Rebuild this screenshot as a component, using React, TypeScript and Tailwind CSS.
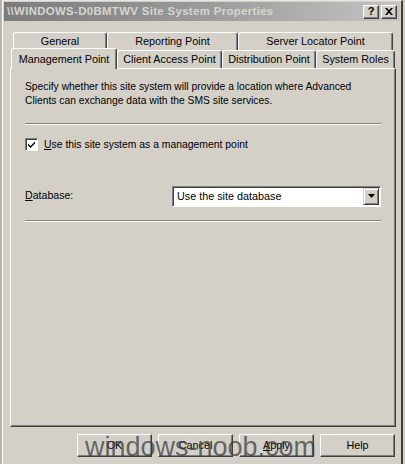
import React from "react";

const font = { fontFamily: '"Liberation Sans", Arial, sans-serif' };

function Tab({ label, w, h, selected }: { label: string; w: number; h: number; selected?: boolean }) {
  return (
    <div
      className={
        "flex items-center justify-center rounded-t-[3px] border-t border-l border-white border-r border-r-[#404040] bg-[#d4d0c8] text-[10.8px] text-black shadow-[inset_-1px_0_0_#808080] " +
        (selected ? "relative z-10" : "")
      }
      style={{ width: w, height: h }}
    >
      {label}
    </div>
  );
}

function Button({ children }: { children: React.ReactNode }) {
  return (
    <div className="flex h-[23px] w-[75px] items-center justify-center border border-t-white border-l-white border-r-[#404040] border-b-[#404040] bg-[#d4d0c8] text-[10.8px] text-black shadow-[inset_-1px_-1px_0_#808080]">
      {children}
    </div>
  );
}

function Separator() {
  return <div className="h-[2px] w-full border-t border-t-[#808080] border-b border-b-white" />;
}

export default function App() {
  return (
    <div className="relative h-[464px] w-[405px] overflow-hidden bg-[#d4d0c8]" style={font}>
      <div className="absolute left-0 top-0 h-full w-[2px] bg-[#b8b4ac]" />
      <div className="ml-[2px] flex h-[464px] w-[401px] flex-col border-l border-l-white border-r-2 border-r-[#404040] border-t border-t-[#e8e6e2]">
        {/* title bar */}
        <div className="mx-[1px] mt-[1px] flex h-[19px] items-center bg-gradient-to-r from-[#7c7c7c] via-[#9a9a9a] to-[#c4c4c4] pl-[3px] pr-[3px]">
          <span className="text-[11.4px] font-bold tracking-[0.35px] text-[#d8d5cf]">\\WINDOWS-D0BMTWV Site System Properties</span>
          <div className="ml-auto flex gap-[2px]">
            <div className="flex h-[14px] w-[16px] items-center justify-center border border-t-white border-l-white border-r-[#404040] border-b-[#404040] bg-[#d4d0c8] text-[11px] font-bold leading-none text-black shadow-[inset_-1px_-1px_0_#808080]">
              ?
            </div>
            <div className="flex h-[14px] w-[16px] items-center justify-center border border-t-white border-l-white border-r-[#404040] border-b-[#404040] bg-[#d4d0c8] shadow-[inset_-1px_-1px_0_#808080]">
              <svg width="8" height="7" viewBox="0 0 8 7">
                <path d="M0 0h2l2 2.2L6 0h2L5 3.5 8 7H6L4 4.8 2 7H0l3-3.5z" fill="#000" />
              </svg>
            </div>
          </div>
        </div>

        {/* tabs */}
        <div className="mt-[11px] flex pl-[10px]">
          <Tab label="General" w={94} h={18} />
          <Tab label="Reporting Point" w={131} h={18} />
          <Tab label="Server Locator Point" w={155} h={18} />
        </div>
        <div className="-mt-[2px] flex items-start pl-[8px]">
          <Tab label="Management Point" w={106} h={21} selected />
          <div className="mt-[2px] flex">
            <Tab label="Client Access Point" w={105} h={18} />
            <Tab label="Distribution Point" w={94} h={18} />
            <Tab label="System Roles" w={79} h={18} />
          </div>
        </div>

        {/* panel */}
        <div className="-mt-[1px] ml-[7px] flex h-[359px] w-[386px] flex-col border-t border-l border-white border-r border-b border-r-[#404040] border-b-[#404040] px-[14px] pt-[11px] shadow-[inset_-1px_-1px_0_#808080]">
          <p className="text-[10.3px] leading-[14px] text-black">
            Specify whether this site system will provide a location where Advanced Clients can exchange data with the SMS site services.
          </p>
          <div className="mt-[15px]">
            <Separator />
          </div>
          <div className="mt-[12px] flex items-center gap-[6px]">
            <div className="flex h-[13px] w-[13px] items-center justify-center border border-t-[#808080] border-l-[#808080] border-r-white border-b-white bg-white shadow-[inset_1px_1px_0_#404040]">
              <svg width="9" height="9" viewBox="0 0 9 9">
                <path d="M1 3.5l2.5 2.5L8 1.5v2L3.5 8 1 5.5z" fill="#000" />
              </svg>
            </div>
            <span className="text-[10.4px] text-black">
              <span className="underline">U</span>se this site system as a management point
            </span>
          </div>
          <div className="mt-[33px] flex items-center">
            <span className="w-[147px] text-[10.6px] text-black">
              <span className="underline">D</span>atabase:
            </span>
            <div className="flex h-[21px] flex-1 items-center border border-t-[#808080] border-l-[#808080] border-r-white border-b-white bg-white shadow-[inset_1px_1px_0_#404040]">
              <span className="ml-[4px] text-[10.8px] text-black">Use the site database</span>
              <div className="ml-auto mr-[1px] flex h-[17px] w-[16px] items-center justify-center border border-t-[#d4d0c8] border-l-[#d4d0c8] border-r-[#404040] border-b-[#404040] bg-[#d4d0c8] shadow-[inset_1px_1px_0_white,inset_-1px_-1px_0_#808080]">
                <svg width="7" height="4" viewBox="0 0 7 4">
                  <path d="M0 0h7L3.5 4z" fill="#000" />
                </svg>
              </div>
            </div>
          </div>
          <div className="mt-[13px]">
            <Separator />
          </div>
        </div>

        {/* buttons */}
        <div className="mt-[7px] flex justify-end gap-[6px] pr-[6px]">
          <Button>OK</Button>
          <Button>Cancel</Button>
          <Button>
            <span className="underline">A</span>pply
          </Button>
          <Button>Help</Button>
        </div>
      </div>

      {/* watermark */}
      <div className="pointer-events-none absolute left-[85px] top-[432px] text-[27px] leading-[30px] text-[#3f3f3f]/75">
        windows-noob.com
      </div>
    </div>
  );
}
